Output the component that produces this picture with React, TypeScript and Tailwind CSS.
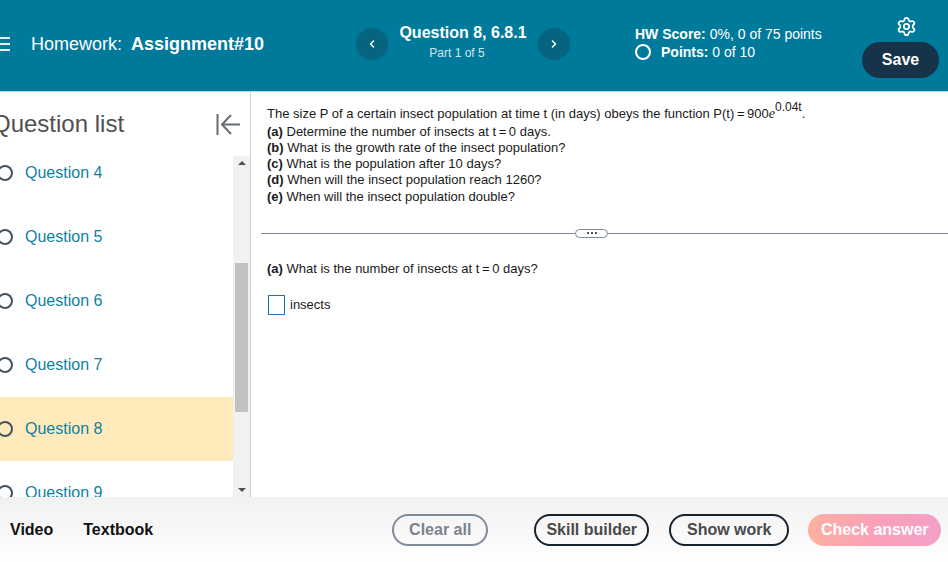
import { ChevronLeft, ChevronRight, Settings } from "lucide-react"

const questions = [4, 5, 6, 7, 8, 9]

function Ring({ className }: { className: string }) {
  return <span className={`block shrink-0 rounded-full ${className}`} />
}

function Header() {
  return (
    <header className="flex h-[92px] shrink-0 border-b border-[#b9d3de] bg-[#007a9b] text-white">
      <div className="flex w-[356px] shrink-0 items-center pb-[4px]">
        <div className="-ml-[1px] flex w-[11px] flex-col gap-[4px]">
          <span className="h-[2px] bg-[#e4f0f4]" />
          <span className="h-[2px] bg-[#e4f0f4]" />
          <span className="h-[2px] bg-[#e4f0f4]" />
        </div>
        <span className="ml-[21px] text-[18px] leading-6">Homework:</span>
        <span className="ml-[9px] text-[18px] font-bold leading-6">Assignment#10</span>
      </div>

      <div className="flex w-[214px] shrink-0 items-start justify-between pt-[28px]">
        <button className="flex h-[32px] w-[32px] items-center justify-center rounded-full bg-[#06647f]">
          <ChevronLeft size={12} strokeWidth={3} />
        </button>
        <div className="-mt-[5px] text-center">
          <div className="text-[16px] font-bold leading-5">Question 8, 6.8.1</div>
          <div className="mr-[12px] mt-[2px] text-[12px] leading-4 text-[#d3e6ed]">Part 1 of 5</div>
        </div>
        <button className="flex h-[32px] w-[32px] items-center justify-center rounded-full bg-[#06647f]">
          <ChevronRight size={12} strokeWidth={3} />
        </button>
      </div>

      <div className="ml-[65px] w-[227px] shrink-0 pt-[25px] text-[14px] leading-[18px]">
        <div>
          <b>HW Score:</b> 0%, 0 of 75 points
        </div>
        <div className="flex items-center">
          <Ring className="h-[16px] w-[16px] border-2 border-white" />
          <span className="ml-[10px]">
            <b>Points:</b> 0 of 10
          </span>
        </div>
      </div>

      <div className="flex flex-col items-center pt-[16px]">
        <Settings size={21} strokeWidth={2} className="ml-[12px]" />
        <button className="mt-[5px] h-[36px] w-[77px] rounded-full bg-[#16334a] text-[16px] font-bold">Save</button>
      </div>
    </header>
  )
}

function Sidebar() {
  return (
    <aside className="flex w-[251px] shrink-0 flex-col border-r border-[#c5d2dd]">
      <div className="flex h-[64px] shrink-0 items-center justify-between pr-[10px]">
        <h2 className="-ml-[8px] text-[24px] leading-8 text-[#505050]">Question list</h2>
        <svg width="24" height="21" viewBox="0 0 24 21" fill="none" stroke="#666d70" strokeWidth="2">
          <path d="M1.5 0V21" />
          <path d="M15 1L6 10.5L15 20" />
          <path d="M6 10.5H24" />
        </svg>
      </div>
      <div className="flex min-h-0 flex-1">
        <ul className="min-w-0 flex-1 overflow-hidden">
          {questions.map((n, i) => (
            <li
              key={n}
              className={`flex h-[64px] items-center ${i === 0 ? "-mt-[15px]" : ""} ${n === 8 ? "bg-[#feeabb]" : ""}`}
            >
              <Ring className="-ml-[3px] h-[16px] w-[16px] border-2 border-[#44535f]" />
              <span className="ml-[12px] text-[16px] text-[#13809f]">Question {n}</span>
            </li>
          ))}
        </ul>
        <div className="flex w-[17px] shrink-0 flex-col items-center justify-between bg-[#f1f1f1] py-[5px]">
          <span className="h-0 w-0 border-x-[4px] border-b-[4px] border-x-transparent border-b-[#505050]" />
          <span className="mb-[76px] mt-[98px] w-[13px] flex-1 bg-[#c1c1c1]" />
          <span className="h-0 w-0 border-x-[4px] border-t-[4px] border-x-transparent border-t-[#505050]" />
        </div>
      </div>
    </aside>
  )
}

function Content() {
  return (
    <main className="min-w-0 flex-1 pt-[14px] text-[13px] leading-4 text-[#1a1a1a]">
      <div className="pl-[16px]">
        <p className="h-[18px] whitespace-nowrap">
          The size P of a certain insect population at time t (in days) obeys the function P(t){"\u2009=\u2009"}900
          <i className="font-['Liberation_Serif',serif] text-[14px] leading-[0]">e</i>
          <sup className="relative -top-[2px] align-super text-[12px] leading-[0]">0.04t</sup>.
        </p>
        <p>
          <b>(a)</b> Determine the number of insects at t{"\u2009=\u2009"}0 days.
        </p>
        <p>
          <b>(b)</b> What is the growth rate of the insect population?
        </p>
        <p>
          <b>(c)</b> What is the population after 10 days?
        </p>
        <p>
          <b>(d)</b> When will the insect population reach 1260?
        </p>
        <p className="mt-[1px]">
          <b>(e)</b> When will the insect population double?
        </p>
      </div>

      <div className="mt-[23px] flex h-[10px] items-center pl-[10px]">
        <div className="h-px flex-1 bg-[#7d8a96]" />
        <div className="flex h-[9px] w-[33px] shrink-0 items-center justify-center gap-[2px] rounded-full border border-[#7d8a96]">
          <span className="h-[2px] w-[2px] bg-[#44535f]" />
          <span className="h-[2px] w-[2px] bg-[#44535f]" />
          <span className="h-[2px] w-[2px] bg-[#44535f]" />
        </div>
        <div className="h-px w-[340px] shrink-0 bg-[#7d8a96]" />
      </div>

      <p className="mt-[23px] pl-[16px]">
        <b>(a)</b> What is the number of insects at t{"\u2009=\u2009"}0 days?
      </p>

      <div className="mt-[18px] flex items-center pl-[17px]">
        <span className="block h-[20px] w-[17px] border border-[#1a73c4]" />
        <span className="ml-[5px]">insects</span>
      </div>
    </main>
  )
}

function Footer() {
  return (
    <footer className="flex h-[65px] shrink-0 items-start bg-gradient-to-b from-[#f1f1f1] to-white pt-[17px] text-[16px] font-bold">
      <span className="ml-[10px] mt-[6px] leading-[20px] text-[#111]">Video</span>
      <span className="ml-[30px] mt-[6px] leading-[20px] text-[#111]">Textbook</span>
      <button className="ml-[239px] h-[32px] w-[96px] rounded-full border-2 border-[#7f8a9a] text-[#7a8290]">
        Clear all
      </button>
      <button className="ml-[46px] h-[32px] w-[115px] rounded-full border-2 border-[#16222e] text-[#4a4a4a]">
        Skill builder
      </button>
      <button className="ml-[20px] h-[32px] w-[120px] rounded-full border-2 border-[#16222e] text-[#4a4a4a]">
        Show work
      </button>
      <button className="ml-[19px] h-[32px] w-[133px] rounded-full bg-gradient-to-r from-[#fcb0a0] via-[#f9a0b8] to-[#f3a0c8] text-white">
        Check answer
      </button>
    </footer>
  )
}

export default function App() {
  return (
    <div className="flex h-[562px] w-[948px] flex-col overflow-hidden bg-white font-['Liberation_Sans',Arial,sans-serif]">
      <Header />
      <div className="flex min-h-0 flex-1">
        <Sidebar />
        <Content />
      </div>
      <Footer />
    </div>
  )
}
